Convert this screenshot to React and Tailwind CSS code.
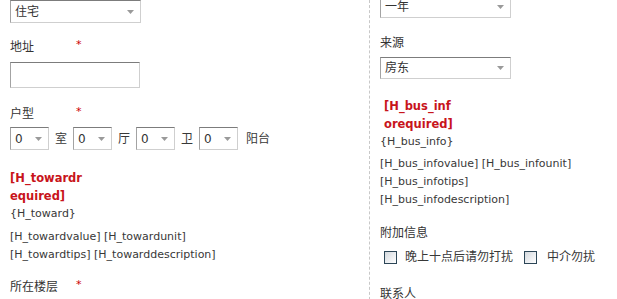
import React from "react";

const FONT = { fontFamily: '"DejaVu Sans", "Noto Sans CJK SC", sans-serif' };

function Arrow() {
  return (
    <svg width="7" height="4" viewBox="0 0 7 4" className="shrink-0">
      <path d="M0 0 L7 0 L3.5 4 Z" fill="#9a9a9a" />
    </svg>
  );
}

function Select({ value, w = "w-[131px]", h = "h-[23px]" }) {
  return (
    <div
      className={`${w} ${h} shrink-0 flex items-center justify-between bg-white border border-t-[#7c7c7c] border-l-[#a3a3a3] border-r-[#cfcfcf] border-b-[#cfcfcf] pl-[4px] pr-[6px] text-[12px] text-[#333]`}
    >
      <span className="leading-none">{value}</span>
      <Arrow />
    </div>
  );
}

function Label({ text, star }) {
  return (
    <div className="flex items-center leading-[18px] text-[12px] text-[#333]">
      <span className={star ? "w-[66px]" : ""}>{text}</span>
      {star && <span className="text-[#cc0000] text-[11px] leading-[18px] -mt-[4px]">*</span>}
    </div>
  );
}

function Checkbox() {
  return (
    <span className="w-[13px] h-[13px] border border-[#2c4657] bg-gradient-to-br from-[#d4d9de] to-[#ffffff] shrink-0" />
  );
}

export default function App() {
  return (
    <div className="w-[617px] h-[299px] overflow-hidden bg-white flex items-start" style={FONT}>
      {/* left column */}
      <div className="w-[369px] shrink-0 pl-[10px] text-[11px] text-[#383838]">
        <Select value="住宅" />
        <div className="mt-[15px]"><Label text="地址" star /></div>
        <div className="mt-[6px] w-[130px] h-[26px] bg-white border border-t-[#7c7c7c] border-l-[#a3a3a3] border-r-[#cfcfcf] border-b-[#cfcfcf]" />
        <div className="mt-[17px]"><Label text="户型" star /></div>
        <div className="mt-[4px] flex items-center text-[12px]">
          <Select value="0" w="w-[39px]" />
          <span className="mx-[6px]">室</span>
          <Select value="0" w="w-[39px]" />
          <span className="mx-[6px]">厅</span>
          <Select value="0" w="w-[39px]" />
          <span className="mx-[6px]">卫</span>
          <Select value="0" w="w-[39px]" />
          <span className="ml-[8px]">阳台</span>
        </div>
        <div className="mt-[19px] w-[74px] break-all font-bold text-[11.5px] leading-[18px] text-[#c8141b]">
          [H_towardrequired]
        </div>
        <div className="leading-[18px]">{"{H_toward}"}</div>
        <div className="mt-[5px] leading-[18px]">
          [H_towardvalue] [H_towardunit]
          <br />
          [H_towardtips] [H_towarddescription]
        </div>
        <div className="mt-[14px]"><Label text="所在楼层" star /></div>
      </div>

      {/* right column */}
      <div className="flex-1 min-h-[320px] border-l border-dashed border-[#c8c8c8] pl-[10px] -mt-[5px] text-[11px] text-[#383838]">
        <Select value="一年" />
        <div className="mt-[16px]"><Label text="来源" /></div>
        <div className="mt-[5px]"><Select value="房东" h="h-[22px]" /></div>
        <div className="mt-[18px] ml-[4px] w-[74px] break-all font-bold text-[11.5px] leading-[18px] text-[#c8141b]">
          [H_bus_inforequired]
        </div>
        <div className="leading-[18px]">{"{H_bus_info}"}</div>
        <div className="mt-[4px] leading-[18px]">
          [H_bus_infovalue] [H_bus_infounit]
          <br />
          [H_bus_infotips]
          <br />
          [H_bus_infodescription]
        </div>
        <div className="mt-[15px]"><Label text="附加信息" /></div>
        <div className="mt-[6px] ml-[4px] flex items-center h-[18px] text-[12px]">
          <Checkbox />
          <span className="ml-[8px]">晚上十点后请勿打扰</span>
          <span className="ml-[11px] flex"><Checkbox /></span>
          <span className="ml-[10px]">中介勿扰</span>
        </div>
        <div className="mt-[19px]"><Label text="联系人" /></div>
      </div>
    </div>
  );
}
